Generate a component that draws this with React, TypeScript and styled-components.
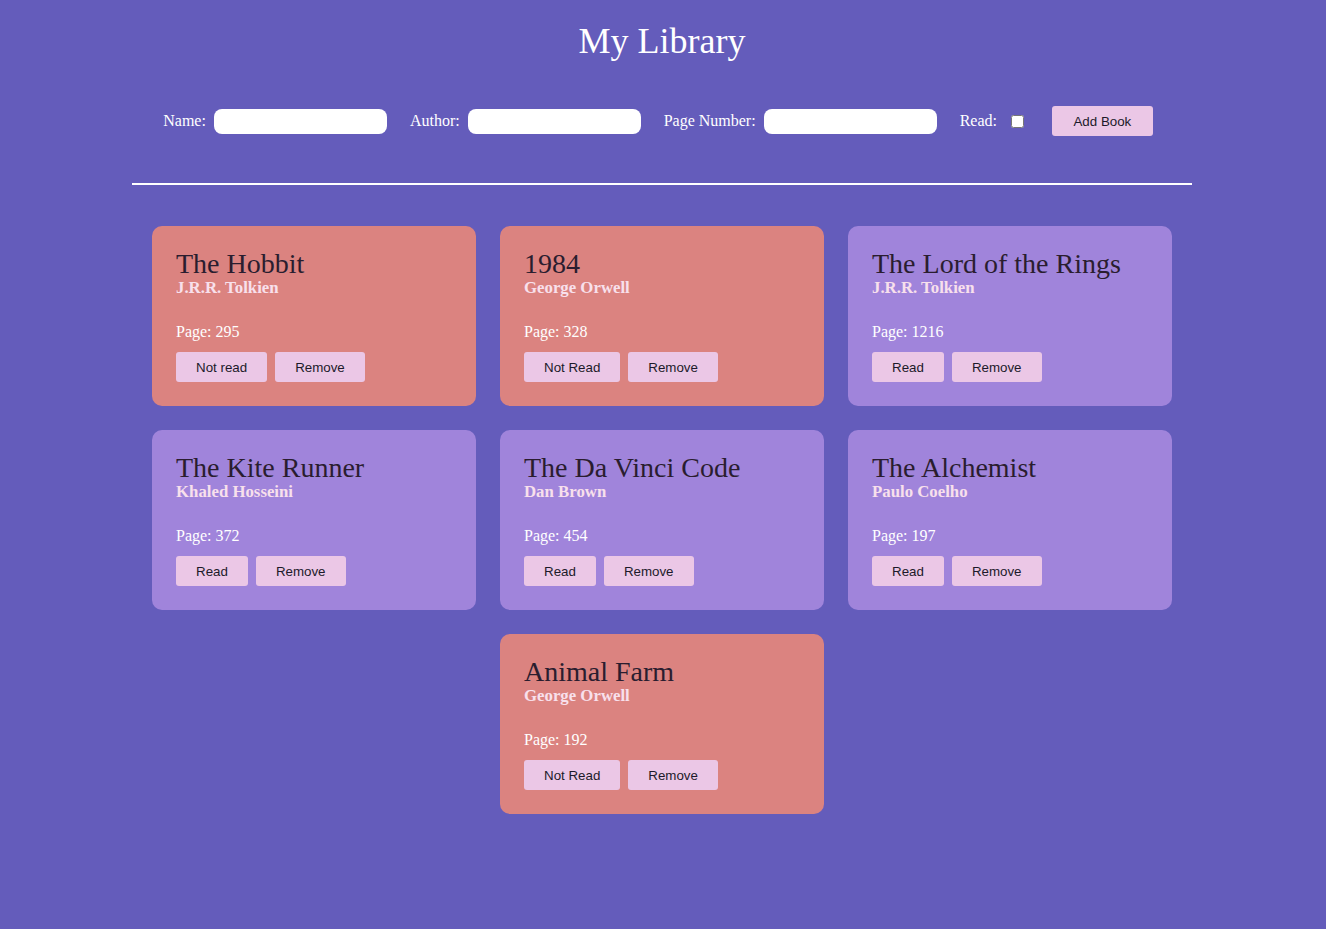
import styled, { createGlobalStyle } from 'styled-components';

type Book = {
  title: string;
  author: string;
  pages: number;
  read: boolean;
  toggleLabel: string;
};

const books: Book[] = [
  { title: 'The Hobbit', author: 'J.R.R. Tolkien', pages: 295, read: false, toggleLabel: 'Not read' },
  { title: '1984', author: 'George Orwell', pages: 328, read: false, toggleLabel: 'Not Read' },
  { title: 'The Lord of the Rings', author: 'J.R.R. Tolkien', pages: 1216, read: true, toggleLabel: 'Read' },
  { title: 'The Kite Runner', author: 'Khaled Hosseini', pages: 372, read: true, toggleLabel: 'Read' },
  { title: 'The Da Vinci Code', author: 'Dan Brown', pages: 454, read: true, toggleLabel: 'Read' },
  { title: 'The Alchemist', author: 'Paulo Coelho', pages: 197, read: true, toggleLabel: 'Read' },
  { title: 'Animal Farm', author: 'George Orwell', pages: 192, read: false, toggleLabel: 'Not Read' },
];

const GlobalStyle = createGlobalStyle`
  html, body {
    margin: 0;
    padding: 0;
    background: #645cbb;
    font-family: "Liberation Serif", "Times New Roman", serif;
    color: #ffffff;
  }
  #root {
    min-height: 100vh;
  }
`;

const Page = styled.div`
  width: 1060px;
  padding: 21px 2px 0 0;
  margin: 0 auto;
`;

const Title = styled.h1`
  margin: 0;
  font-size: 36px;
  font-weight: normal;
  line-height: 41px;
  text-align: center;
`;

const Form = styled.form`
  margin-top: 44px;
  height: 30px;
  display: flex;
  align-items: center;
  justify-content: center;
  padding-right: 8px;
  font-size: 16px;
`;

const Field = styled.label`
  display: flex;
  align-items: center;
  gap: 8px;
  margin-right: 23px;
`;

const TextInput = styled.input`
  width: 173px;
  height: 25px;
  box-sizing: border-box;
  border: none;
  border-radius: 8px;
  background: #ffffff;
  padding: 0 8px;
`;

const Check = styled.input`
  width: 13px;
  height: 13px;
  margin: 0 0 0 6px;
`;

const Button = styled.button<{ $wide?: boolean }>`
  height: 30px;
  padding: 0 ${({ $wide }) => ($wide ? '21.5px' : '20px')};
  border: none;
  border-radius: 3px;
  background: #ebc7e6;
  color: #1c1a2a;
  font-family: "Liberation Sans", Arial, sans-serif;
  font-size: 13.33px;
  cursor: pointer;
`;

const AddButton = styled(Button)`
  margin-left: 5px;
`;

const Divider = styled.hr`
  margin: 47px 0 0;
  border: none;
  height: 2px;
  background: #ffffff;
`;

const Grid = styled.div`
  margin-top: 41px;
  display: flex;
  flex-wrap: wrap;
  justify-content: center;
  gap: 24px;
  padding-bottom: 40px;
`;

const Card = styled.div<{ $read: boolean }>`
  width: 324px;
  height: 180px;
  box-sizing: border-box;
  padding: 24px;
  border-radius: 10px;
  background: ${({ $read }) => ($read ? '#a084db' : '#db8380')};
  display: flex;
  flex-direction: column;
`;

const BookTitle = styled.h2`
  margin: 0;
  font-size: 28px;
  font-weight: normal;
  line-height: 28px;
  color: #2a1d2f;
`;

const Author = styled.div`
  margin-top: 1px;
  font-size: 16.8px;
  font-weight: bold;
  line-height: 18px;
  color: #f8e0ec;
`;

const Pages = styled.div`
  margin-top: 26px;
  font-size: 16px;
  line-height: 18px;
  color: #ffffff;
`;

const Actions = styled.div`
  margin-top: 11px;
  display: flex;
  gap: 8px;
`;

export default function App() {
  return (
    <>
      <GlobalStyle />
      <Page>
        <Title>My Library</Title>
        <Form onSubmit={(e) => e.preventDefault()}>
          <Field>
            Name:
            <TextInput type="text" />
          </Field>
          <Field>
            Author:
            <TextInput type="text" />
          </Field>
          <Field>
            Page Number:
            <TextInput type="text" />
          </Field>
          <Field>
            Read:
            <Check type="checkbox" />
          </Field>
          <AddButton $wide type="submit">
            Add Book
          </AddButton>
        </Form>
        <Divider />
        <Grid>
          {books.map((book) => (
            <Card key={book.title} $read={book.read}>
              <BookTitle>{book.title}</BookTitle>
              <Author>{book.author}</Author>
              <Pages>Page: {book.pages}</Pages>
              <Actions>
                <Button type="button">{book.toggleLabel}</Button>
                <Button type="button">Remove</Button>
              </Actions>
            </Card>
          ))}
        </Grid>
      </Page>
    </>
  );
}
